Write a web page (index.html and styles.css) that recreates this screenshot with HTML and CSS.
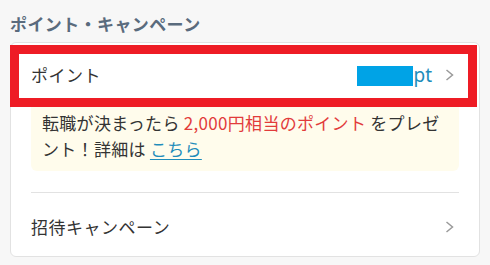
FILE: index.html
```html
<!DOCTYPE html>
<html lang="ja">
<head>
<meta charset="utf-8">
<link rel="stylesheet" href="styles.css">
</head>
<body>
<section class="section">
  <h2 class="title">ポイント・キャンペーン</h2>
  <div class="card">
    <a class="row row-first" href="#">
      <span class="label">ポイント</span>
      <span class="value"><span class="mask"></span>pt</span>
      <svg class="chev" width="20" height="14" viewBox="0 0 20 14"><polyline points="7.5,2 13.5,7 7.5,12" fill="none" stroke="#9a9a9a" stroke-width="1.5"/></svg>
    </a>
    <p class="notice">転職が決まったら <span class="em">2,000円相当のポイント</span> をプレゼント！詳細は <a class="link" href="#">こちら</a></p>
    <a class="row row-last" href="#">
      <span class="label">招待キャンペーン</span>
      <svg class="chev" width="20" height="14" viewBox="0 0 20 14"><polyline points="7.5,2 13.5,7 7.5,12" fill="none" stroke="#9a9a9a" stroke-width="1.5"/></svg>
    </a>
  </div>
  <div class="highlight"></div>
</section>
</body>
</html>
```
FILE: styles.css
```css
html, body {
  margin: 0;
  padding: 0;
}
body {
  background: #f7f7f7;
  font-family: "Noto Sans CJK JP", "Noto Sans", sans-serif;
  color: #333;
}
.section {
  position: relative;
  padding: 12px 10px 0;
}
.title {
  margin: 0 0 6px;
  font-size: 17px;
  line-height: 24px;
  font-weight: bold;
  color: #5a6b7d;
  letter-spacing: 0.4px;
}
.card {
  width: 470px;
  box-sizing: border-box;
  background: #fff;
  border: 1px solid #e2e2e2;
  border-radius: 6px;
  padding: 0 20px;
}
.row {
  display: flex;
  align-items: center;
  text-decoration: none;
  color: #333;
  font-size: 17px;
  line-height: 24px;
  letter-spacing: 0.5px;
}
.row-first {
  padding: 20px 0 12px;
}
.row-last {
  padding: 22px 0 17px;
  border-top: 1px solid #e2e2e2;
}
.label {
  flex: 1;
}
.value {
  display: flex;
  align-items: center;
  color: #1f8dbb;
  font-family: "Noto Sans", sans-serif;
  font-size: 19px;
  letter-spacing: 0;
}
.mask {
  display: inline-block;
  width: 56px;
  height: 20px;
  margin-top: 1px;
  background: #00a3e6;
}
.chev {
  display: block;
  margin-left: 7px;
}
.notice {
  margin: 0 0 21px;
  background: #fffcec;
  border-radius: 6px;
  padding: 11px 11px 9px;
  font-size: 17px;
  line-height: 26px;
  letter-spacing: 0.3px;
  color: #333;
}
.em {
  color: #e23b3b;
}
.link {
  color: #1f8dbb;
  text-decoration: underline;
  text-underline-offset: 3px;
}
.highlight {
  position: absolute;
  left: 10px;
  top: 45px;
  width: 467px;
  height: 62px;
  box-sizing: border-box;
  border: 9px solid #ee1c25;
  pointer-events: none;
}
```
